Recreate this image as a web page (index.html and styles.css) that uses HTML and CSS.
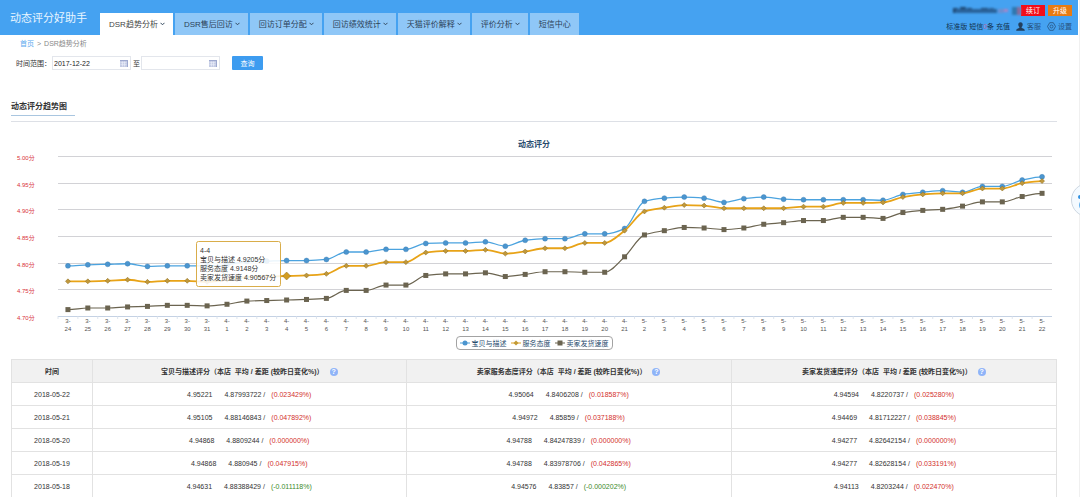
FILE: index.html
```html
<!DOCTYPE html>
<html lang="zh-CN">
<head>
<meta charset="utf-8">
<title>动态评分好助手</title>
<link rel="stylesheet" href="styles.css">
</head>
<body>
<div class="page">
  <header class="topbar">
    <div class="brand">动态评分好助手</div>
    <nav class="tabs">
      <a class="tab active" href="#">DSR趋势分析<svg class="chev" viewBox="0 0 5 4"><path d="M.5 .8l2 2 2-2"/></svg></a>
      <a class="tab" href="#">DSR售后回访<svg class="chev" viewBox="0 0 5 4"><path d="M.5 .8l2 2 2-2"/></svg></a>
      <a class="tab" href="#">回访订单分配<svg class="chev" viewBox="0 0 5 4"><path d="M.5 .8l2 2 2-2"/></svg></a>
      <a class="tab" href="#">回访绩效统计<svg class="chev" viewBox="0 0 5 4"><path d="M.5 .8l2 2 2-2"/></svg></a>
      <a class="tab" href="#">天猫评价解释<svg class="chev" viewBox="0 0 5 4"><path d="M.5 .8l2 2 2-2"/></svg></a>
      <a class="tab" href="#">评价分析<svg class="chev" viewBox="0 0 5 4"><path d="M.5 .8l2 2 2-2"/></svg></a>
      <a class="tab" href="#">短信中心</a>
    </nav>
    <div class="account">
      <div class="account-row">
        <svg class="masked" viewBox="0 0 68 9" aria-hidden="true">
          <g fill="#1d4670"><rect x="0" y="2" width="5" height="5"/><rect x="7" y="1" width="6" height="6"/><rect x="14" y="2" width="5" height="5"/><rect x="21" y="3" width="6" height="4"/><rect x="28" y="2" width="7" height="5"/></g>
          <g fill="#2a629a"><rect x="2" y="3" width="42" height="4"/><rect x="36" y="2" width="5" height="5"/></g>
          <rect x="45" y="3" width="6" height="4" fill="#6d8fd0"/><rect x="51" y="3" width="4" height="3" fill="#a884c8"/>
          <rect x="59" y="1" width="5" height="8" fill="#2f78b0"/><rect x="64" y="1" width="4" height="8" fill="#8c6c9c"/>
        </svg>
        <button class="pill renew" type="button">续订</button>
        <button class="pill upgrade" type="button">升级</button>
      </div>
      <div class="account-row links">
        <span>标准版 短信<b class="count">0</b>条 <a href="#">充值</a></span>
        <a class="icon-link" href="#"><svg viewBox="0 0 9 9"><path fill="#223f5c" d="M4.500 .3C6 .3 6.800 1.300 6.700 2.700 6.600 3.900 6.100 4.700 5.500 5.100c0 .8.300 1 1.300 1.300C8.100 6.800 8.700 7.200 8.800 8.700H.2C.3 7.200.9 6.800 2.200 6.400c1-.3 1.300-.5 1.300-1.300C2.900 4.700 2.400 3.900 2.300 2.700 2.200 1.300 3 .3 4.500.3z"/></svg>客服</a>
        <a class="icon-link" href="#"><svg viewBox="0 0 9 9" fill="none" stroke="#27527d" stroke-width=".8"><path d="M2.700 .7h3.600l2.200 3.800-2.200 3.800H2.700L.5 4.500z" stroke-linejoin="round"/><circle cx="4.500" cy="4.500" r="1.500"/></svg>设置</a>
      </div>
    </div>
  </header>

  <main class="content">
    <div class="crumbs"><a href="#">首页</a><span>&gt;</span><span>DSR趋势分析</span></div>
    <form class="filter">
      <label for="from">时间范围：</label>
      <span class="date"><input id="from" type="text" value="2017-12-22"><svg viewBox="0 0 8 8"><path fill="#c3cbe4" d="M0 1h8v7H0z"/><path fill="#9ea9cf" d="M0 1h8v1H0zM7 2h1v6H7z"/><path stroke="#eef0fa" stroke-width=".6" d="M.5 3.700h6M.5 5.700h6M2.500 2.500v5M4.500 2.500v5"/></svg></span>
      <label for="to">至</label>
      <span class="date"><input id="to" type="text" value=""><svg viewBox="0 0 8 8"><path fill="#c3cbe4" d="M0 1h8v7H0z"/><path fill="#9ea9cf" d="M0 1h8v1H0zM7 2h1v6H7z"/><path stroke="#eef0fa" stroke-width=".6" d="M.5 3.700h6M.5 5.700h6M2.500 2.500v5M4.500 2.500v5"/></svg></span>
      <button class="query" type="button">查询</button>
    </form>

    <div class="section-head"><h2>动态评分趋势图</h2></div>

    <section class="chart">
      <h3>动态评分</h3>
      <svg id="plot" class="plot"></svg>
      <ul class="legend">
        <li><svg viewBox="0 0 10 6"><path d="M0 3h10" stroke="#4b9fd8"/><circle cx="5" cy="3" r="2.500" fill="#4b95cf"/></svg>宝贝与描述</li>
        <li><svg viewBox="0 0 10 6"><path d="M0 3h10" stroke="#e0a020"/><path d="M5 .5L7.500 3 5 5.500 2.500 3z" fill="#c29a35"/></svg>服务态度</li>
        <li><svg viewBox="0 0 10 6"><path d="M0 3h10" stroke="#6b6450"/><path d="M2.500 .5h5v5h-5z" fill="#6b6450"/></svg>卖家发货速度</li>
      </ul>
    </section>

    <table class="scores">
      <colgroup><col class="c-date"><col class="c-item"><col><col></colgroup>
      <thead><tr>
        <th>时间</th>
        <th>宝贝与描述评分（本店 &nbsp;平均 / 差距 (较昨日变化%)）<i class="help">?</i></th>
        <th>卖家服务态度评分（本店 &nbsp;平均 / 差距 (较昨日变化%)）<i class="help">?</i></th>
        <th>卖家发货速度评分（本店 &nbsp;平均 / 差距 (较昨日变化%)）<i class="help">?</i></th>
      </tr></thead>
      <tbody>
        <tr><td>2018-05-22</td><td><span class="own">4.95221</span>4.87993722 /<span class="up">(0.023429%)</span></td><td><span class="own">4.95064</span>4.8406208 /<span class="up">(0.018587%)</span></td><td><span class="own">4.94594</span>4.8220737 /<span class="up">(0.025280%)</span></td></tr>
        <tr><td>2018-05-21</td><td><span class="own">4.95105</span>4.88146843 /<span class="up">(0.047892%)</span></td><td><span class="own">4.94972</span>4.85859 /<span class="up">(0.037188%)</span></td><td><span class="own">4.94469</span>4.81712227 /<span class="up">(0.038845%)</span></td></tr>
        <tr><td>2018-05-20</td><td><span class="own">4.94868</span>4.8809244 /<span class="up">(0.000000%)</span></td><td><span class="own">4.94788</span>4.84247839 /<span class="up">(0.000000%)</span></td><td><span class="own">4.94277</span>4.82642154 /<span class="up">(0.000000%)</span></td></tr>
        <tr><td>2018-05-19</td><td><span class="own">4.94868</span>4.880945 /<span class="up">(0.047915%)</span></td><td><span class="own">4.94788</span>4.83978706 /<span class="up">(0.042865%)</span></td><td><span class="own">4.94277</span>4.82628154 /<span class="up">(0.033191%)</span></td></tr>
        <tr><td>2018-05-18</td><td><span class="own">4.94631</span>4.88388429 /<span class="down">(-0.011118%)</span></td><td><span class="own">4.94576</span>4.83857 /<span class="down">(-0.000202%)</span></td><td><span class="own">4.94113</span>4.8203244 /<span class="up">(0.022470%)</span></td></tr>
      </tbody>
    </table>
  </main>
  <div class="float-clip"><button class="float-btn" type="button" aria-label="助手"><svg viewBox="0 0 20 20"><circle cx="3" cy="7" r="2" fill="#2f8fe0"/><path d="M3 7h14" stroke="#2f8fe0" stroke-width="2"/><path d="M4 12c-2 3-1 7 3 7" stroke="#6ab4ee" stroke-width="2" fill="none"/></svg></button></div>
</div>
<script src="chart.js"></script>
</body>
</html>
```
FILE: styles.css
```css
* { box-sizing: border-box; }
html { scrollbar-width: none; }
body {
  margin: 0;
  background: #fff;
  color: #333;
  font: 7px/9px "Liberation Sans", "Noto Sans CJK SC", sans-serif;
  overflow-x: hidden;
}
a { color: inherit; text-decoration: none; }
button, input { font: inherit; }

.page { padding-right: 1px; border-right: 1px solid #f0f0f0; }

.topbar {
  display: flex;
  align-items: flex-end;
  height: 35px;
  background: #45a2f1;
}
.brand {
  width: 100px;
  padding-left: 10px;
  align-self: center;
  color: #e8f5ff;
  font-size: 11px;
  line-height: 16px;
  white-space: nowrap;
}
.tabs { display: flex; gap: 2px; font-size: 8px; }
.tab {
  display: flex;
  align-items: center;
  gap: 2px;
  height: 22px;
  padding: 0 8px 0 9px;
  background: #8fc7f7;
  color: #2c4257;
  white-space: nowrap;
}
.tab.active { background: #fff; color: #444; }
.chev { width: 5px; height: 4px; fill: none; stroke: #34495e; }

.account {
  margin-left: auto;
  padding-right: 6px;
  height: 35px;
  display: flex;
  flex-direction: column;
  align-items: flex-end;
  padding-top: 5px;
  gap: 6px;
  color: #12324f;
}
.account-row { display: flex; align-items: center; gap: 3px; white-space: nowrap; }
.masked { width: 68px; height: 9px; filter: blur(1px); margin-right: -3px; }
.pill {
  width: 24px;
  height: 11px;
  padding: 0;
  border: 0;
  color: #fff;
  line-height: 11px;
}
.renew { background: #f30d18; }
.upgrade { background: #e87b12; }
.links { gap: 6px; }
.count { color: #b465a8; font-weight: normal; }
.icon-link { display: flex; align-items: center; gap: 2px; color: #27527d; }
.icon-link svg { width: 9px; height: 9px; }

.content { padding: 4px 21px 0 11px; }
.crumbs { display: flex; gap: 3px; padding-left: 9px; color: #888; }
.crumbs a { color: #5aa9ee; }

.filter { display: flex; align-items: center; height: 14px; margin-top: 8px; padding-left: 5px; }
.filter label { color: #333; }
.date {
  display: flex;
  align-items: center;
  width: 79px;
  height: 14px;
  margin: 0 2px 0 1px;
  padding-right: 2px;
  border: 1px solid #e3e6ec;
}
.date input {
  flex: 1;
  min-width: 0;
  height: 12px;
  padding: 0 1px;
  border: 0;
  outline: 0;
  background: transparent;
  color: #222;
}
.date svg { width: 8px; height: 8px; }
.query {
  width: 31px;
  height: 14px;
  margin-left: 10px;
  padding: 0;
  border: 0;
  border-radius: 1px;
  background: #3d9cf0;
  color: #fff;
}

.section-head { margin-top: 31px; padding-bottom: 5px; border-bottom: 1px solid #dde0e6; }
.section-head h2 {
  width: 64px;
  margin: 0;
  padding-bottom: 2px;
  border-bottom: 1px solid #a9c6e0;
  color: #333;
  font-size: 8px;
  line-height: 12px;
  white-space: nowrap;
}

.chart { display: flex; flex-direction: column; align-items: center; padding-top: 17px; }
.chart h3 { margin: 0; color: #274b6d; font-size: 8px; line-height: 11px; }
.plot { display: block; width: 100%; height: 186px; }
.plot text { font-size: 6px; fill: #555; }
.plot .y-label { fill: #d8303a; }
.plot .tip { font-size: 7px; fill: #333; }
.legend {
  display: flex;
  gap: 4px;
  height: 14px;
  margin: 0 0 9px;
  padding: 0 3px;
  align-items: center;
  border: 1px solid #a3a3a3;
  border-radius: 4px;
  color: #274b6d;
  list-style: none;
}
.legend li { display: flex; align-items: center; gap: 2px; white-space: nowrap; }
.legend svg { width: 10px; height: 6px; }

.scores { width: 100%; table-layout: fixed; border-collapse: collapse; }
.c-date { width: 81px; }
.c-item { width: 30%; }
.scores th, .scores td {
  height: 23px;
  padding: 0;
  border: 1px solid #e2e2e2;
  text-align: center;
  white-space: nowrap;
}
.scores th { background: #f1f1f1; }
.scores tbody tr:last-child td { border-bottom: 0; }
.own { margin-right: 12px; }
.up, .down { margin-left: 6px; color: #d3302c; }
.down { color: #3c8a2a; }
.help {
  display: inline-block;
  width: 8px;
  height: 8px;
  margin-left: 6px;
  border-radius: 50%;
  background: #8fb4f8;
  color: #fff;
  font-style: normal;
  line-height: 8px;
}

.float-clip {
  position: fixed;
  top: 183px;
  right: 0;
  width: 9px;
  height: 34px;
  overflow: hidden;
}
.float-btn {
  width: 34px;
  height: 34px;
  padding: 5px;
  border: 1px solid #ccd6e0;
  border-radius: 50%;
  background: #f4faff;
}
.float-btn svg { display: block; width: 20px; height: 20px; }
```
FILE: chart.js
```js
const days = [];
for (let d = 24; d <= 31; d++) days.push([3, d]);
for (let d = 1; d <= 21; d++) days.push([4, d]);
for (let d = 2; d <= 22; d++) days.push([5, d]);

const series = [
  { color: '#4ba3df', fill: '#4b95cf', width: 1.3, shape: 'circle', values: [
    4.794, 4.796, 4.797, 4.798, 4.793, 4.794, 4.794, 4.794,
    4.796, 4.802, 4.803, 4.804, 4.804, 4.806, 4.820, 4.820, 4.825, 4.825, 4.836, 4.837, 4.837, 4.839, 4.831, 4.842, 4.845, 4.845, 4.854, 4.854, 4.864,
    4.915, 4.921, 4.923, 4.921, 4.913, 4.920, 4.923, 4.919, 4.918, 4.918, 4.918, 4.918, 4.917, 4.928, 4.932, 4.935, 4.932, 4.943, 4.943, 4.955, 4.961] },
  { color: '#e8a317', fill: '#c0983c', width: 1.8, shape: 'diamond', values: [
    4.765, 4.765, 4.766, 4.768, 4.764, 4.766, 4.766, 4.764,
    4.768, 4.773, 4.774, 4.775, 4.776, 4.779, 4.794, 4.794, 4.801, 4.801, 4.819, 4.822, 4.822, 4.824, 4.817, 4.821, 4.827, 4.827, 4.837, 4.837, 4.860,
    4.896, 4.903, 4.908, 4.907, 4.902, 4.902, 4.902, 4.902, 4.905, 4.905, 4.912, 4.912, 4.913, 4.923, 4.928, 4.930, 4.930, 4.939, 4.939, 4.949, 4.953] },
  { color: '#6b6450', fill: '#6b6450', width: 1.2, shape: 'square', values: [
    4.712, 4.715, 4.715, 4.717, 4.718, 4.720, 4.720, 4.719,
    4.722, 4.728, 4.729, 4.730, 4.731, 4.733, 4.748, 4.748, 4.758, 4.758, 4.776, 4.779, 4.779, 4.781, 4.774, 4.778, 4.783, 4.783, 4.782, 4.782, 4.811,
    4.852, 4.860, 4.866, 4.865, 4.862, 4.865, 4.872, 4.875, 4.879, 4.879, 4.885, 4.885, 4.883, 4.894, 4.898, 4.900, 4.906, 4.914, 4.914, 4.924, 4.930] }
];

const TOP = 6, HEIGHT = 160, LEFT = 47, RIGHT = 5;
const yOf = v => TOP + (5 - v) / 0.3 * HEIGHT;

function curve(pts) {
  const slope = (a, b) => (b[1] - a[1]) / (b[0] - a[0]);
  const tangent = pts.map((p, i) => {
    if (i === 0 || i === pts.length - 1) return 0;
    const before = slope(pts[i - 1], p), after = slope(p, pts[i + 1]);
    return before * after <= 0 ? 0 : 2 * before * after / (before + after);
  });
  let d = `M${pts[0]}`;
  for (let i = 1; i < pts.length; i++) {
    const a = pts[i - 1], b = pts[i], h = (b[0] - a[0]) / 3;
    d += `C${a[0] + h},${a[1] + h * tangent[i - 1]} ${b[0] - h},${b[1] - h * tangent[i]} ${b[0]},${b[1]}`;
  }
  return d;
}

function marker(shape, x, y, fill, r) {
  if (shape === 'circle') return `<circle cx="${x}" cy="${y}" r="2.5" fill="${fill}" stroke="#3b7fb4" stroke-width=".4"/>`;
  if (shape === 'square') return `<rect x="${x - 2.5}" y="${y - 2.5}" width="5" height="5" fill="${fill}"/>`;
  return `<path d="M${x} ${y - r}l${r} ${r}l${-r} ${r}l${-r} ${-r}z" fill="${fill}" stroke="#8a6d20" stroke-width=".5"/>`;
}

function draw() {
  const svg = document.getElementById('plot');
  const width = svg.clientWidth;
  const step = (width - LEFT - RIGHT) / days.length;
  const xOf = i => LEFT + step * (i + 0.5);
  const active = 11;
  let out = '';
  for (let i = 0; i <= 6; i++) {
    const v = 5 - i * 0.05, y = Math.round(yOf(v)) + 0.5;
    out += `<path d="M${LEFT} ${y}H${width - RIGHT}" stroke="${i === 6 ? '#c5d2e4' : '#d2d2d6'}"/>`;
    out += `<text class="y-label" x="6" y="${y + 3}">${v.toFixed(2)}分</text>`;
  }
  days.forEach(([m, d], i) => {
    const x = LEFT + step * i, base = TOP + HEIGHT;
    out += `<path d="M${x} ${base}v3" stroke="#d5deea" stroke-width=".8"/>`;
    out += `<text x="${xOf(i)}" y="${base + 7}" text-anchor="middle">${m}-</text>`;
    out += `<text x="${xOf(i)}" y="${base + 15}" text-anchor="middle">${d}</text>`;
  });
  series.forEach(s => {
    const pts = s.values.map((v, i) => [xOf(i), yOf(v)]);
    out += `<path d="${curve(pts)}" fill="none" stroke="${s.color}" stroke-width="${s.width}"/>`;
    pts.forEach(([x, y], i) => {
      out += i === active && s.shape === 'diamond'
        ? marker(s.shape, x, y, '#d29c22', 4)
        : marker(s.shape, x, y, s.fill, 2.5);
    });
  });
  const tx = Math.round(xOf(active)) - 91, ty = 91;
  out += `<rect x="${tx + 0.5}" y="${ty + 0.5}" width="84" height="45" rx="2" fill="#fff" fill-opacity=".88" stroke="#d9ad4a"/>`;
  ['4-4', '宝贝与描述 4.9205分', '服务态度 4.9148分', '卖家发货速度 4.90567分'].forEach((t, i) => {
    out += `<text class="tip" x="${tx + 4}" y="${ty + 12 + i * 9}">${t}</text>`;
  });
  svg.innerHTML = out;
}

draw();
window.addEventListener('resize', draw);
```
